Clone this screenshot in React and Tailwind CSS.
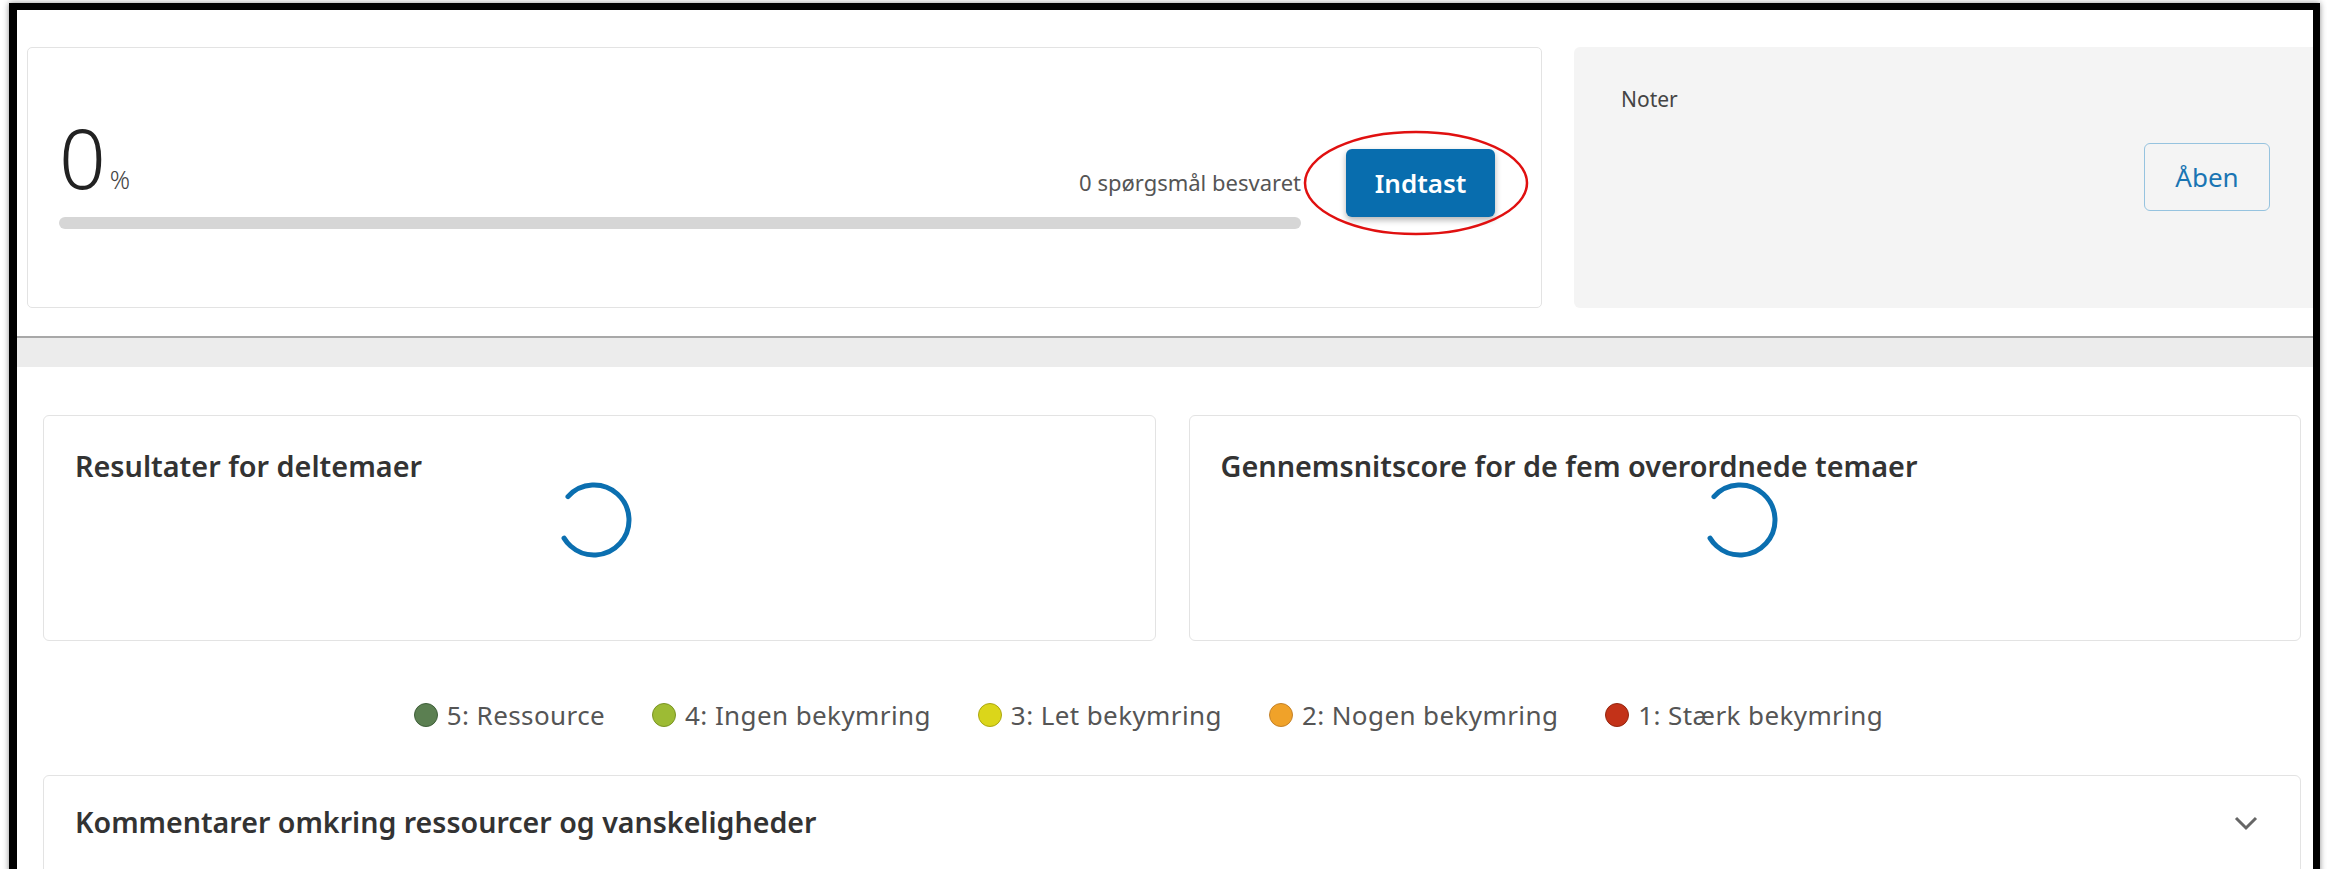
import React from 'react';

const LEGEND = [
  { label: '5: Ressource', dot: 'bg-[#5b7f51] border-[#3f5f3a]' },
  { label: '4: Ingen bekymring', dot: 'bg-[#9dbb34] border-[#7a9424]' },
  { label: '3: Let bekymring', dot: 'bg-[#dbd61a] border-[#aca712]' },
  { label: '2: Nogen bekymring', dot: 'bg-[#f0a229] border-[#c4822a]' },
  { label: '1: Stærk bekymring', dot: 'bg-[#c33218] border-[#94260f]' },
];

const Spinner = () => (
  <svg width="76" height="76" viewBox="0 0 76 76" className="block">
    <circle
      cx="38"
      cy="38"
      r="35"
      fill="none"
      stroke="#0b6fb0"
      strokeWidth="5"
      strokeLinecap="round"
      strokeDasharray="175 220"
      transform="rotate(222 38 38)"
    />
  </svg>
);

const ChartCard = ({ title }) => (
  <div className="h-[226px] rounded-[6px] border border-[#e3e3e3] bg-white px-[31px] pt-[31px] flex flex-col">
    <h3 className="text-[28.8px] leading-[38px] font-semibold text-[#333]">{title}</h3>
    <div className="flex justify-center pr-[10px] mt-[-3px]">
      <Spinner />
    </div>
  </div>
);

const ProgressCard = () => (
  <div className="w-[1515px] h-[261px] shrink-0 rounded-[5px] border border-[#e3e3e3] bg-white flex items-start pl-[31px] pr-[46px] pt-[68px]">
    <div className="flex-1 flex flex-col">
      <div className="flex items-end justify-between">
        <div className="flex items-baseline text-[#222]">
          <span className="text-[82px] leading-none font-light">0</span>
          <span className="text-[25px] leading-none font-light ml-[4px] text-[#444]">%</span>
        </div>
        <span className="text-[22px] leading-none text-[#555] mb-[5px]">0 spørgsmål besvaret</span>
      </div>
      <div className="h-[12px] rounded-full bg-[#d6d6d6] mt-[19px]"></div>
    </div>
    <div className="relative ml-[45px] mt-[33px]">
      <button className="w-[149px] h-[68px] rounded-[6px] bg-[#086dae] text-white text-[26px] font-semibold shadow-[0_3px_6px_rgba(0,0,0,0.3)]">
        Indtast
      </button>
      <svg
        className="absolute left-[-44px] top-[-19px] pointer-events-none"
        width="228"
        height="108"
        viewBox="0 0 228 108"
      >
        <ellipse cx="114" cy="53" rx="111" ry="51" fill="none" stroke="#e01010" strokeWidth="2.5" />
      </svg>
    </div>
  </div>
);

const NotesPanel = () => (
  <div className="flex-1 h-[261px] rounded-l-[6px] bg-[#f4f4f4] flex flex-col pl-[47px] pr-[43px] pt-[39px]">
    <span className="text-[21px] leading-[26px] text-[#444]">Noter</span>
    <button className="self-end mt-[31px] w-[126px] h-[68px] rounded-[6px] border-[1.5px] border-[#96c3df] text-[26px] text-[#1a75b3]">
      Åben
    </button>
  </div>
);

export default function App() {
  return (
    <div
      className="w-[2331px] h-[869px] overflow-hidden bg-white"
      style={{ fontFamily: '"Noto Sans", Lato, sans-serif' }}
    >
      <div className="ml-[9px] mt-[3px] w-[2311px] h-[900px] border-[7px] border-l-[8px] border-black shadow-[0_0_6px_rgba(0,0,0,0.45)] overflow-hidden bg-white">
        <div className="h-[328px] border-b-2 border-[#a8a8a8] flex gap-[32px] pl-[10px] pt-[37px]">
          <ProgressCard />
          <NotesPanel />
        </div>
        <div className="h-[29px] bg-[#ececec]"></div>

        <div className="pl-[26px] pr-[12px] pt-[48px]">
          <div className="grid grid-cols-2 gap-[33px]">
            <ChartCard title="Resultater for deltemaer" />
            <ChartCard title="Gennemsnitscore for de fem overordnede temaer" />
          </div>

          <div className="flex justify-center mt-[59px] h-[30px] items-center">
            {LEGEND.map((item) => (
              <div key={item.label} className="flex items-center mr-[47px]">
                <span className={`w-[24px] h-[24px] rounded-full border ${item.dot}`}></span>
                <span className="ml-[9px] text-[26px] tracking-[0.4px] text-[#555]">{item.label}</span>
              </div>
            ))}
          </div>

          <div className="mt-[45px] h-[140px] rounded-[6px] border border-[#e3e3e3] bg-white flex items-start justify-between pl-[31px] pr-[42px] pt-[27px]">
            <h3 className="text-[28.6px] leading-[38px] font-semibold text-[#333]">
              Kommentarer omkring ressourcer og vanskeligheder
            </h3>
            <svg width="24" height="15" viewBox="0 0 24 15" className="mt-[13px]">
              <polyline points="2,2 12,12 22,2" fill="none" stroke="#666" strokeWidth="3" />
            </svg>
          </div>
        </div>
      </div>
    </div>
  );
}
